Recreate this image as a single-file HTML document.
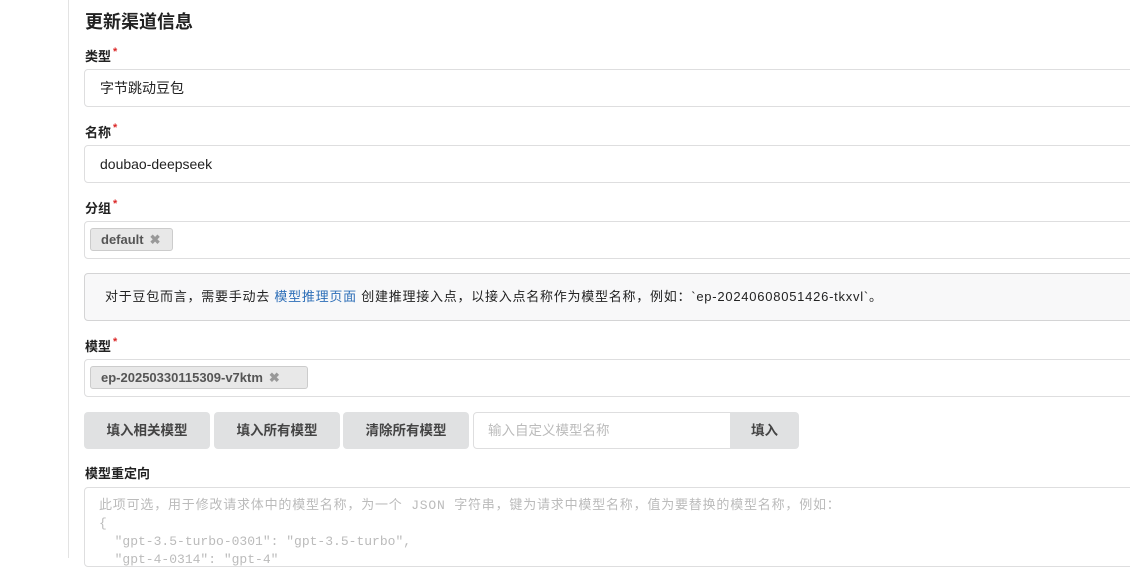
<!DOCTYPE html>
<html><head><meta charset="utf-8"><style>
*{box-sizing:border-box;margin:0;padding:0}
body{width:1130px;height:558px;overflow:hidden;background:#fff;font-family:"Liberation Sans","Noto Sans CJK SC",sans-serif;color:rgba(0,0,0,.87);position:relative}
.a{position:absolute}
.line{left:68px;top:0;width:1px;height:558px;background:#e3e3e3}
h1{position:absolute;left:85px;top:8px;font-size:18px;font-weight:bold;color:#222}
.lbl{position:absolute;left:85px;font-size:13px;font-weight:bold;color:#222}
.lbl:after{content:"*";color:#db2828;font-size:11px;position:relative;top:-6px;left:2px}
.lbl.n:after{content:""}
.in{position:absolute;left:84px;width:1100px;height:38px;border:1px solid #dededf;border-radius:4px;font-size:14px;color:#222;padding-left:15px;line-height:36px}
.chip{position:absolute;height:23px;background:#e8e8e8;border:1px solid #ccc;border-radius:3px;font-size:13px;font-weight:bold;color:#555;padding-left:10px;line-height:21px}
.chip b{color:#999;margin-left:6px}
.msg{position:absolute;left:84px;top:273px;width:1100px;height:48px;background:#f8f8f9;border:1px solid #d4d4d5;border-radius:4px;font-size:13px;color:#222;padding-left:20px;line-height:46px;letter-spacing:0.75px}
.msg span{color:#2e6fb8}
.btn{position:absolute;top:412px;height:37px;background:#e0e1e2;border-radius:4px;font-size:13.5px;font-weight:bold;color:#444;text-align:center;line-height:37px}
.ta{position:absolute;left:84px;top:487px;width:1100px;height:80px;border:1px solid #dededf;border-radius:4px;padding:9px 14px;font-family:"Liberation Mono","Noto Sans CJK SC",monospace;font-size:13px;line-height:18px;color:#bbb;white-space:pre}
.ta .f{letter-spacing:0.8px}
</style></head><body>
<div class="a line"></div>
<h1>更新渠道信息</h1>
<div class="lbl" style="top:46px">类型</div>
<div class="in" style="top:69px">字节跳动豆包</div>
<div class="lbl" style="top:122px">名称</div>
<div class="in" style="top:145px">doubao-deepseek</div>
<div class="lbl" style="top:198px">分组</div>
<div class="in" style="top:221px"></div>
<div class="chip" style="left:90px;top:228px;width:83px">default<b>✖</b></div>
<div class="msg">对于豆包而言，需要手动去 <span>模型推理页面</span> 创建推理接入点，以接入点名称作为模型名称，例如：`ep-20240608051426-tkxvl`。</div>
<div class="lbl" style="top:336px">模型</div>
<div class="in" style="top:359px"></div>
<div class="chip" style="left:90px;top:366px;width:218px">ep-20250330115309-v7ktm<b>✖</b></div>
<div class="btn" style="left:84px;width:126px">填入相关模型</div>
<div class="btn" style="left:214px;width:126px">填入所有模型</div>
<div class="btn" style="left:343px;width:126px">清除所有模型</div>
<div class="a" style="left:473px;top:412px;width:260px;height:37px;border:1px solid #dededf;border-radius:4px 0 0 4px;font-size:13.5px;color:#bbb;padding-left:14px;line-height:35px">输入自定义模型名称</div>
<div class="btn" style="left:730px;width:69px;border-radius:0 4px 4px 0">填入</div>
<div class="lbl n" style="top:463px">模型重定向</div>
<div class="ta"><span class="f">此项可选，用于修改请求体中的模型名称，为一个 JSON 字符串，键为请求中模型名称，值为要替换的模型名称，例如：</span>
{
  "gpt-3.5-turbo-0301": "gpt-3.5-turbo",
  "gpt-4-0314": "gpt-4"</div>
</body></html>
